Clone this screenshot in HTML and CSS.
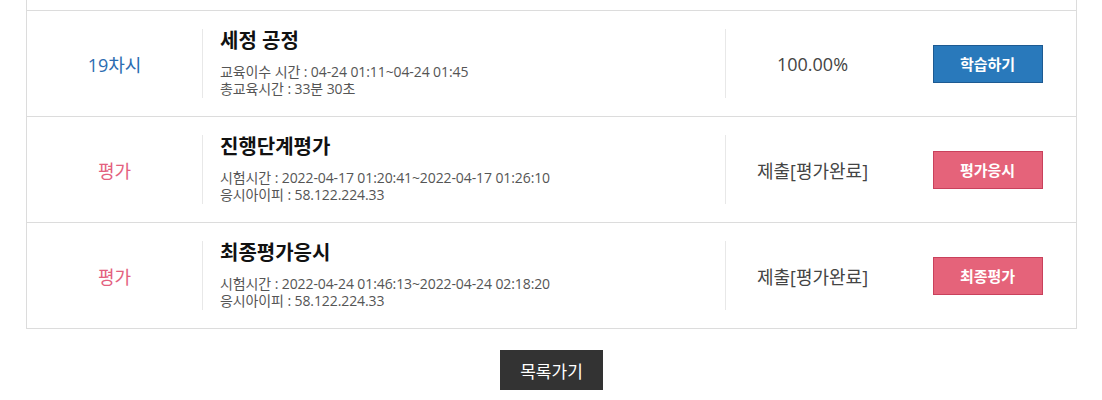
FILE: index.html
```html
<!DOCTYPE html>
<html lang="ko">
<head>
    <meta charset="UTF-8">
    <meta name="viewport" content="width=device-width, initial-scale=1.0">
    <title>학습 현황</title>
    <link rel="stylesheet" href="styles.css">
</head>
<body>
    <div class="container">
        <div class="lesson-list">
            <div class="lesson-row">
                <div class="lesson-no blue">19차시</div>
                <div class="lesson-info">
                    <h3>세정 공정</h3>
                    <p>교육이수 시간 : 04-24 01:11~04-24 01:45</p>
                    <p>총교육시간 : 33분 30초</p>
                </div>
                <div class="lesson-status">100.00%</div>
                <div class="lesson-action">
                    <button class="btn btn-blue">학습하기</button>
                </div>
            </div>

            <div class="lesson-row">
                <div class="lesson-no pink">평가</div>
                <div class="lesson-info">
                    <h3>진행단계평가</h3>
                    <p>시험시간 : 2022-04-17 01:20:41~2022-04-17 01:26:10</p>
                    <p>응시아이피 : 58.122.224.33</p>
                </div>
                <div class="lesson-status">제출[평가완료]</div>
                <div class="lesson-action">
                    <button class="btn btn-pink">평가응시</button>
                </div>
            </div>

            <div class="lesson-row">
                <div class="lesson-no pink">평가</div>
                <div class="lesson-info">
                    <h3>최종평가응시</h3>
                    <p>시험시간 : 2022-04-24 01:46:13~2022-04-24 02:18:20</p>
                    <p>응시아이피 : 58.122.224.33</p>
                </div>
                <div class="lesson-status">제출[평가완료]</div>
                <div class="lesson-action">
                    <button class="btn btn-pink">최종평가</button>
                </div>
            </div>
        </div>

        <div class="bottom-buttons">
            <button class="btn-list">목록가기</button>
        </div>
    </div>
</body>
</html>
```

FILE: styles.css
```css
* {
    margin: 0;
    padding: 0;
    box-sizing: border-box;
    font-family: "Open Sans", "Noto Sans CJK KR", sans-serif;
}

body {
    background-color: #fff;
}

.container {
    margin: 0 25px 0 26px;
}

.lesson-list {
    border: 1px solid #dcdcdc;
    border-top: none;
    padding-top: 10px;
}

.lesson-row {
    display: grid;
    grid-template-columns: 175px 1fr 174px 177px;
    border-top: 1px solid #dcdcdc;
    padding: 18px 0;
}

.lesson-no {
    display: flex;
    align-items: center;
    justify-content: center;
    height: 69px;
    font-size: 18px;
}

.lesson-no.blue {
    color: #2b6cb1;
}

.lesson-no.pink {
    color: #e3607e;
}

.lesson-info {
    border-left: 1px solid #e8e8e8;
    padding-left: 17px;
    height: 69px;
}

.lesson-info h3 {
    font-size: 20px;
    line-height: 24px;
    font-weight: bold;
    color: #111;
    margin-bottom: 10px;
}

.lesson-info p {
    font-size: 14px;
    line-height: 17px;
    letter-spacing: -0.1px;
    color: #555;
}

.lesson-status {
    display: flex;
    align-items: center;
    justify-content: center;
    border-left: 1px solid #e8e8e8;
    height: 69px;
    font-size: 18px;
    color: #444;
}

.lesson-action {
    display: flex;
    align-items: center;
    justify-content: center;
    height: 69px;
}

.btn {
    width: 110px;
    height: 38px;
    font-size: 15px;
    font-weight: bold;
    color: #fff;
    cursor: pointer;
}

.btn-blue {
    background-color: #2979bb;
    border: 1px solid #1d5a92;
}

.btn-pink {
    background-color: #e5637a;
    border: 1px solid #c9415c;
}

.bottom-buttons {
    text-align: center;
    margin-top: 21px;
}

.btn-list {
    width: 103px;
    height: 40px;
    background-color: #333;
    color: #fff;
    border: none;
    font-size: 17px;
    cursor: pointer;
}
```
